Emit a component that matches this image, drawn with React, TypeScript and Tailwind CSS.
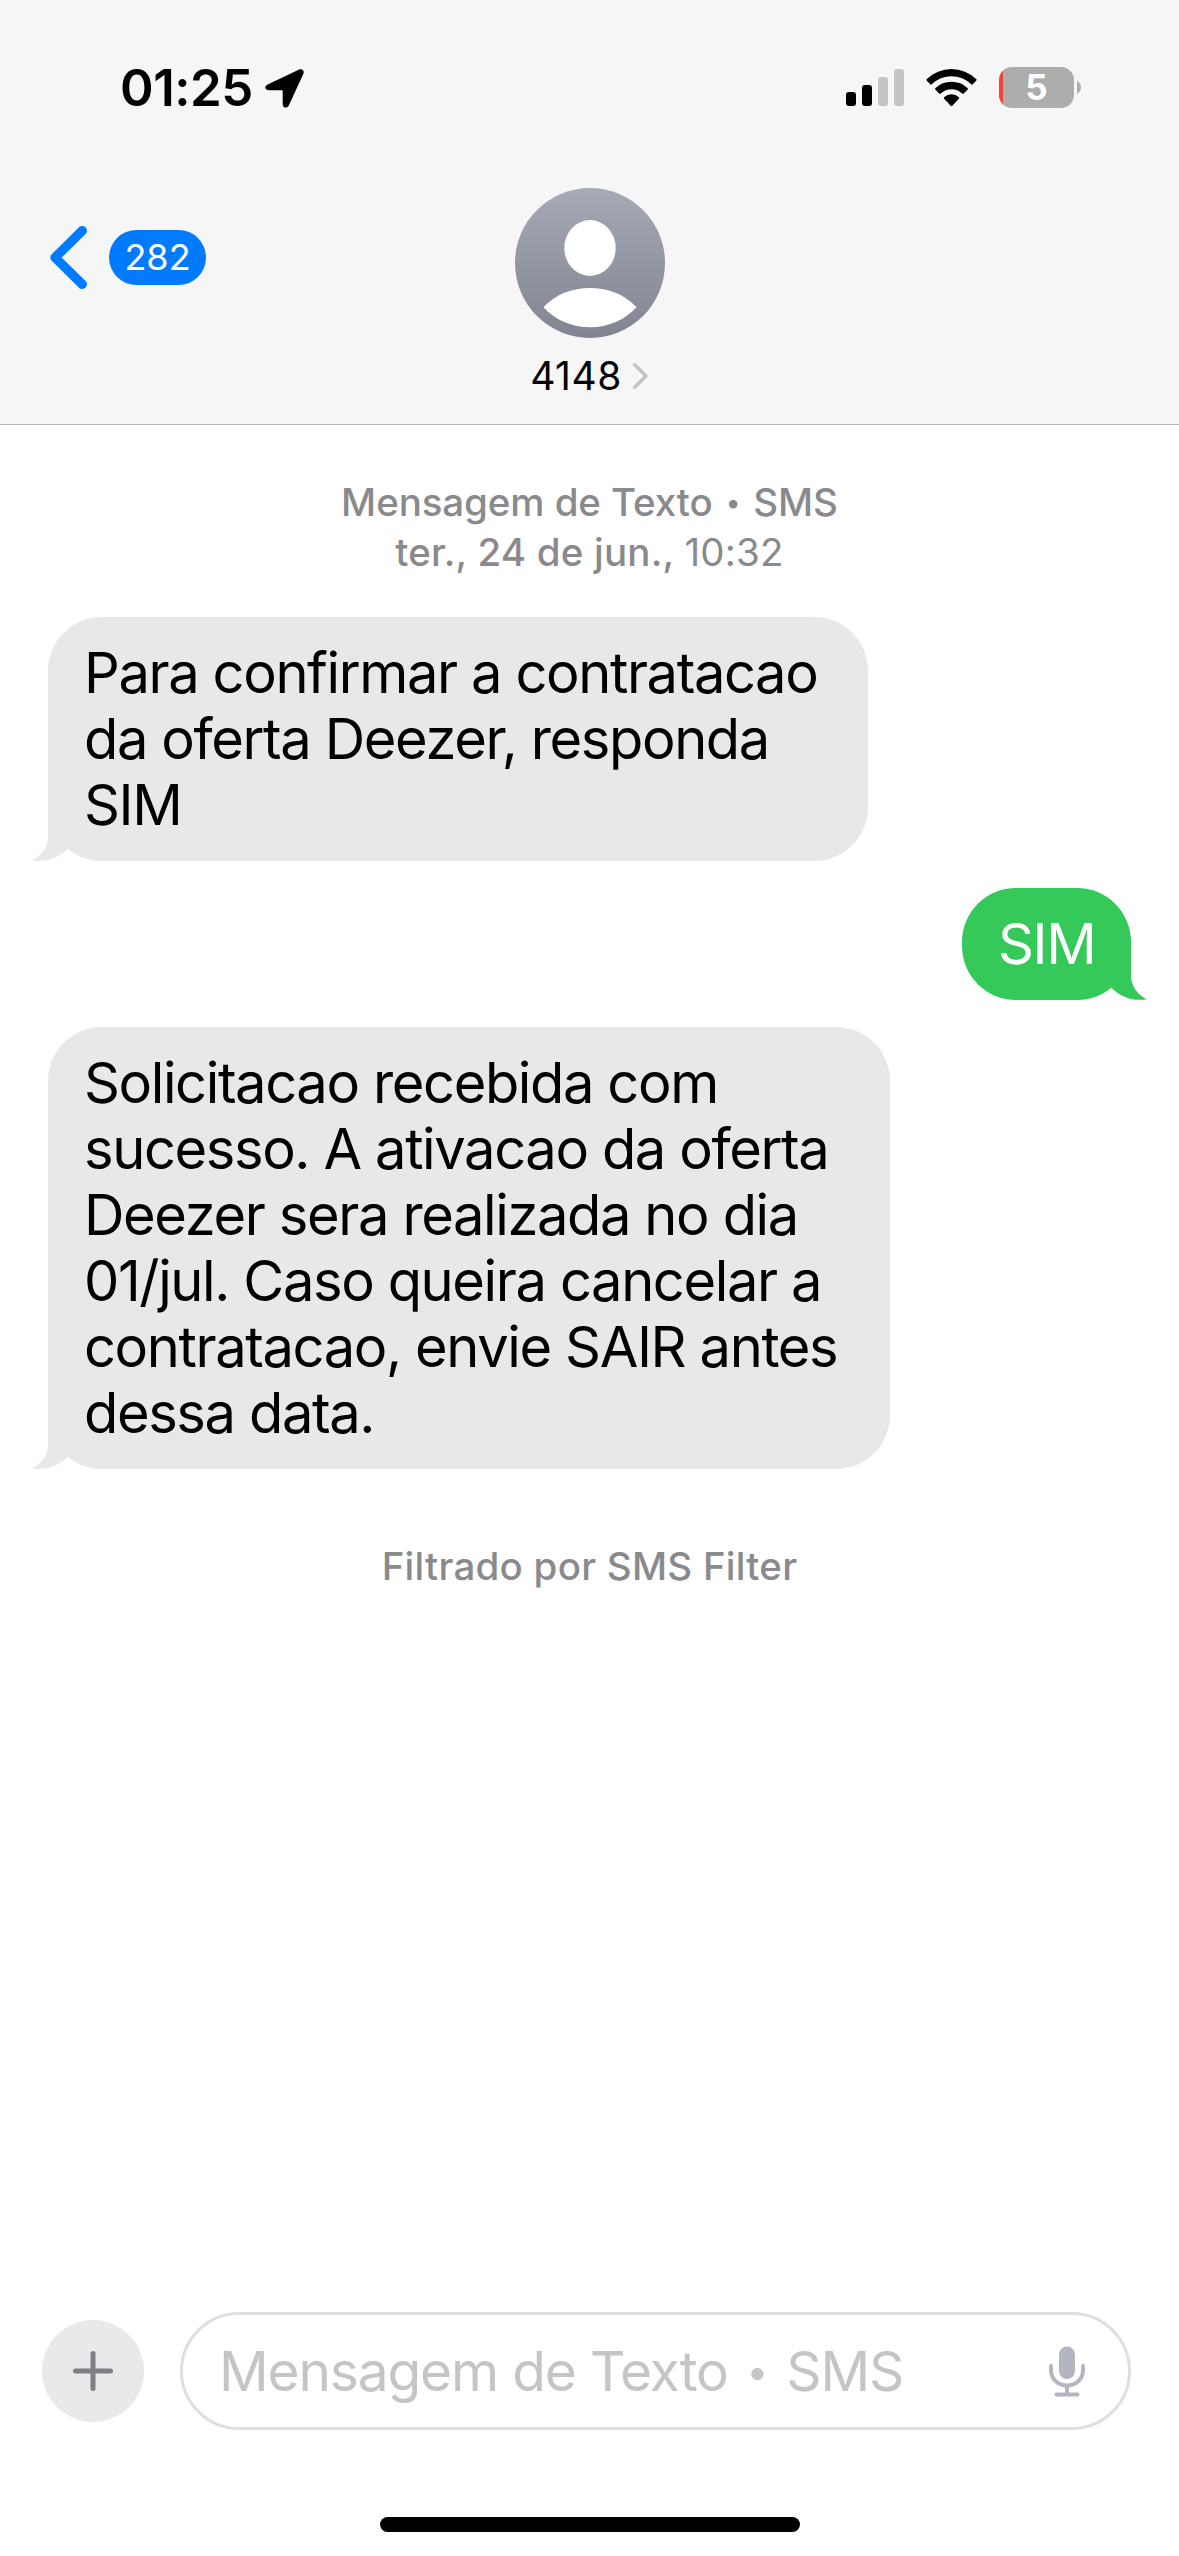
interface Message {
  id: number;
  lines: string[];
  sent?: boolean;
  width: string;
}

const messages: Message[] = [
  {
    id: 1,
    lines: ['Para confirmar a contratacao', 'da oferta Deezer, responda', 'SIM'],
    width: 'w-[820px]',
  },
  { id: 2, lines: ['SIM'], sent: true, width: 'w-[169px]' },
  {
    id: 3,
    lines: [
      'Solicitacao recebida com',
      'sucesso. A ativacao da oferta',
      'Deezer sera realizada no dia',
      '01/jul. Caso queira cancelar a',
      'contratacao, envie SAIR antes',
      'dessa data.',
    ],
    width: 'w-[842px]',
  },
];

function SignalIcon() {
  return (
    <svg width="58" height="37" viewBox="0 0 58 37">
      <rect x="0" y="23" width="10" height="14" rx="3" fill="#000" />
      <rect x="16" y="16" width="10" height="21" rx="3" fill="#000" />
      <rect x="32" y="8" width="10" height="29" rx="3" fill="#c5c5c5" />
      <rect x="48" y="0" width="10" height="37" rx="3" fill="#c5c5c5" />
    </svg>
  );
}

function WifiIcon() {
  return (
    <svg width="51" height="38" viewBox="0 0 51 38">
      <path d="M0.6 10.2 A35.5 35.5 0 0 1 50.4 10.2 Q50.9 10.8 50.4 11.4 L46.7 15.3 Q46 16 45.2 15.3 A28 28 0 0 0 5.8 15.3 Q5 16 4.3 15.3 L0.6 11.4 Q0.1 10.8 0.6 10.2Z" />
      <path d="M9.3 19.3 A23 23 0 0 1 41.7 19.3 Q42.3 20 41.7 20.6 L37.8 24.5 Q37 25.2 36.2 24.5 A15.6 15.6 0 0 0 14.8 24.5 Q14 25.2 13.2 24.5 L9.3 20.6 Q8.7 20 9.3 19.3Z" />
      <path d="M18.1 28.3 A10.6 10.6 0 0 1 32.9 28.3 Q33.6 29 32.9 29.7 L26.3 36.8 Q25.5 37.6 24.7 36.8 L18.1 29.7 Q17.4 29 18.1 28.3Z" />
    </svg>
  );
}

function Battery() {
  return (
    <div className="flex items-center gap-[3px]">
      <div className="flex h-[41px] w-[75px] items-center justify-center overflow-hidden rounded-[13px] bg-[linear-gradient(to_right,#f0443a_4px,#adadad_4px)] text-[35px] leading-[41px] font-bold text-white">
        5
      </div>
      <svg width="4" height="13" viewBox="0 0 4 13">
        <path d="M0 0 C2.6 1.4 4 3.8 4 6.5 C4 9.2 2.6 11.6 0 13Z" fill="#adadad" />
      </svg>
    </div>
  );
}

function StatusBar() {
  return (
    <div className="flex h-[188px] items-start justify-between pr-[98px] pl-[120px]">
      <div className="flex pt-[58px]">
        <span className="text-[51px] leading-[60px] font-semibold tracking-[-0.5px]">01:25</span>
        <svg className="mt-[11px] ml-3" width="39" height="39" viewBox="0 0 39 39">
          <path d="M3.2 15.2 L34.2 0.6 C37.2 -0.6 39.6 1.9 38.4 4.8 L23.9 36.3 C22.3 39.8 17.7 39.2 17.7 35.2 L17.7 22 Q17.7 21.3 17 21.3 L4 21.3 C-0.6 21.2 -1 17 3.2 15.2Z" />
        </svg>
      </div>
      <div className="flex items-start">
        <div className="pt-[69px]">
          <SignalIcon />
        </div>
        <div className="pt-[69px] pl-[22px]">
          <WifiIcon />
        </div>
        <div className="pt-[67px] pl-[22px]">
          <Battery />
        </div>
      </div>
    </div>
  );
}

function Avatar() {
  return (
    <svg width="150" height="150" viewBox="0 0 150 150">
      <defs>
        <linearGradient id="avatar" x1="0" y1="0" x2="0" y2="1">
          <stop offset="0" stopColor="#a5aab6" />
          <stop offset="1" stopColor="#828491" />
        </linearGradient>
      </defs>
      <circle cx="75" cy="75" r="75" fill="url(#avatar)" />
      <ellipse cx="75" cy="60" rx="25.7" ry="28" fill="#fff" />
      <path d="M28.5 119.3 C40 106.5 57 100 75 100 C93 100 110 106.5 121.5 119.3 C110 132 93 139.3 75 139.3 C57 139.3 40 132 28.5 119.3Z" fill="#fff" />
    </svg>
  );
}

function Header() {
  return (
    <header className="h-[425px] border-b border-[#b3b3b5] bg-[#f6f6f6]">
      <StatusBar />
      <div className="grid grid-cols-3">
        <div className="flex h-[139px] items-center gap-[22px] pl-[50px]">
          <svg width="37" height="63" viewBox="0 0 37 63" fill="none">
            <path d="M32.3 4.7 L5 31.5 L32.3 58.3" stroke="#007aff" strokeWidth="9.4" strokeLinecap="round" strokeLinejoin="round" />
          </svg>
          <span className="flex h-[55px] w-[97px] items-center justify-center rounded-full bg-[#007aff] text-[36px] leading-[55px] text-white">
            282
          </span>
        </div>
        <div className="flex flex-col items-center">
          <Avatar />
          <div className="mt-[14px] flex items-center gap-[10px] text-[39px] leading-[48px] tracking-[0.5px]">
            <span>4148</span>
            <svg width="17" height="28" viewBox="0 0 17 28" fill="none">
              <path d="M2.5 2.5 L14 14 L2.5 25.5" stroke="#c4c4c6" strokeWidth="3.4" strokeLinecap="round" strokeLinejoin="round" />
            </svg>
          </div>
        </div>
      </div>
    </header>
  );
}

function Bubble({ message }: { message: Message }) {
  const { sent, lines, width } = message;
  return (
    <div className={sent ? 'flex justify-end' : 'flex justify-start'}>
      <div
        className={`relative rounded-[54px] px-9 py-[23px] text-[56px] leading-[66px] tracking-[-1.38px] whitespace-nowrap ${width} ${
          sent ? 'bg-[#34c959] text-white' : 'bg-[#e8e8ea] text-black'
        }`}
      >
        {lines.map((line) => (
          <p key={line}>{line}</p>
        ))}
        {/* Tail */}
        <svg
          className={sent ? 'absolute -right-4 bottom-0 -scale-x-100' : 'absolute bottom-0 -left-4'}
          width="60"
          height="61"
          viewBox="0 0 60 61"
        >
          <path
            d="M16 0 L16 36 C16 47 9.5 56 0 60.2 C13 62.6 26 58.5 35.7 48.7 L40 0Z"
            fill={sent ? '#34c959' : '#e8e8ea'}
          />
        </svg>
      </div>
    </div>
  );
}

function Dot() {
  return <span className="inline-block scale-70">•</span>;
}

function Composer() {
  return (
    <footer className="mt-auto">
      <div className="flex items-center pr-12 pl-[42px]">
        <button className="flex size-[102px] items-center justify-center rounded-full bg-[#e8e9eb]">
          <svg width="40" height="40" viewBox="0 0 40 40" stroke="#7e8085" strokeWidth="5" strokeLinecap="round">
            <path d="M20 2.5 V37.5 M2.5 20 H37.5" />
          </svg>
        </button>
        <div className="ml-9 flex h-[118px] flex-1 items-center justify-between rounded-full border-[3px] border-[#dfdfe0] pr-[43px] pl-9">
          <span className="text-[55px] leading-[66px] tracking-[-1.15px] text-[#c5c5c7]">
            Mensagem de Texto <Dot /> SMS
          </span>
          <svg width="36" height="51" viewBox="0 0 36 51" fill="none" stroke="#b3b5bf">
            <rect x="10" y="0.5" width="16" height="32.5" rx="8" fill="#b3b5bf" stroke="none" />
            <path d="M2 20 V24 C2 33 9 39.5 18 39.5 C27 39.5 34 33 34 24 V20" strokeWidth="4" strokeLinecap="round" />
            <path d="M18 40 V48" strokeWidth="4" />
            <path d="M7.5 48.5 H28.5" strokeWidth="4" strokeLinecap="round" />
          </svg>
        </div>
      </div>
      <div className="mx-auto mt-[87px] mb-6 h-[15px] w-[420px] rounded-full bg-black" />
    </footer>
  );
}

export default function App() {
  return (
    <div className="flex h-[2556px] w-[1179px] flex-col bg-white font-['Inter','Liberation_Sans',sans-serif] text-black">
      <Header />
      <main className="pt-[52px]">
        <div className="text-center text-[38.5px] leading-[50px] font-medium text-[#8a8a8d]">
          <p className="tracking-[-0.1px]">
            Mensagem de Texto <Dot /> SMS
          </p>
          <p className="tracking-[0.2px]">
            ter., 24 de jun., <span className="font-normal">10:32</span>
          </p>
        </div>
        <div className="mt-10 flex flex-col gap-[27px] px-12">
          {messages.map((message) => (
            <Bubble key={message.id} message={message} />
          ))}
        </div>
        <p className="mt-[72px] text-center text-[38.5px] leading-[51px] font-medium tracking-[0.25px] text-[#8a8a8d]">
          Filtrado por SMS Filter
        </p>
      </main>
      <Composer />
    </div>
  );
}
